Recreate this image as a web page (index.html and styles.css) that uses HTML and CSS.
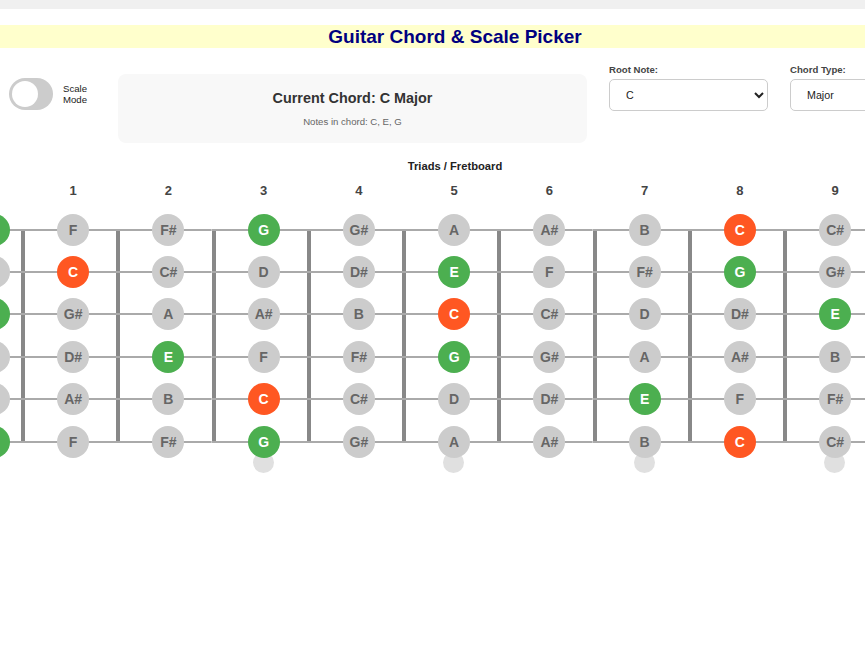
FILE: index.html
```html
<!DOCTYPE html>
<html lang="en">
<head>
    <meta charset="UTF-8">
    <meta name="viewport" content="width=device-width, initial-scale=1.0">
    <title>Guitar Chord &amp; Scale Picker</title>
    <link rel="stylesheet" href="styles.css">
</head>
<body>

<div class="topbar"></div>

<div class="page">
    <h1>Guitar Chord &amp; Scale Picker</h1>

    <div class="controls">
        <!-- Interruptor de modo escala -->
        <div class="toggle-group">
            <div class="switch"><div class="knob"></div></div>
            <span class="switch-label">Scale<br>Mode</span>
        </div>

        <div class="chord-info">
            <h3>Current Chord: C Major</h3>
            <p>Notes in chord: C, E, G</p>
        </div>

        <div class="select-group">
            <label for="root">Root Note:</label>
            <select id="root">
                <option>C</option><option>C#</option><option>D</option><option>D#</option>
                <option>E</option><option>F</option><option>F#</option><option>G</option>
                <option>G#</option><option>A</option><option>A#</option><option>B</option>
            </select>
        </div>

        <div class="select-group">
            <label for="type">Chord Type:</label>
            <select id="type">
                <option>Major</option><option>Minor</option><option>7th</option>
            </select>
        </div>
    </div>

    <div class="fretboard-title">Triads / Fretboard</div>
    <div class="board" id="board"></div>
</div>

<script>
    // Construir el diapasón: cuerdas de la 1ª (Mi agudo) a la 6ª
    var notas = ['C', 'C#', 'D', 'D#', 'E', 'F', 'F#', 'G', 'G#', 'A', 'A#', 'B'];
    var afinacion = [4, 11, 7, 2, 9, 4];
    var acorde = { 0: 'root', 4: 'tone', 7: 'tone' };
    var marcas = [3, 5, 7, 9, 12];
    var board = document.getElementById('board');

    for (var f = 0; f <= 12; f++) {
        var col = document.createElement('div');
        col.className = f === 0 ? 'fret open' : 'fret';

        var num = document.createElement('div');
        num.className = 'fret-num';
        num.innerHTML = f === 0 ? '&nbsp;' : f;
        col.appendChild(num);

        var strings = document.createElement('div');
        strings.className = 'strings';
        afinacion.forEach(function (base) {
            var n = (base + f) % 12;
            var cell = document.createElement('div');
            cell.className = 'string';
            var note = document.createElement('span');
            note.className = 'note' + (acorde[n] ? ' ' + acorde[n] : '');
            note.textContent = notas[n];
            cell.appendChild(note);
            strings.appendChild(cell);
        });
        col.appendChild(strings);

        var inlay = document.createElement('div');
        inlay.className = 'inlay-row';
        if (marcas.indexOf(f) !== -1) {
            var dot = document.createElement('span');
            dot.className = 'dot';
            inlay.appendChild(dot);
        }
        col.appendChild(inlay);

        board.appendChild(col);
    }
</script>

</body>
</html>
```

FILE: styles.css
```css
body {
    margin: 0;
    font-family: "Liberation Sans", Arial, sans-serif;
    background-color: #fff;
    color: #333;
    overflow: hidden;
}

.topbar {
    height: 9px;
    background-color: #f0f0f0;
}

.page {
    width: 910px;
}

h1 {
    margin: 16px 0 0;
    background-color: #ffffcc;
    color: #000080;
    font-size: 19px;
    line-height: 23px;
    text-align: center;
}

.controls {
    display: flex;
    align-items: flex-start;
    gap: 22px;
    padding-left: 9px;
    margin-top: 16px;
}

.toggle-group {
    flex: 0 0 87px;
    display: flex;
    align-items: center;
    gap: 10px;
    margin-top: 14px;
}

.switch {
    width: 44px;
    height: 32px;
    border-radius: 16px;
    background-color: #ccc;
    display: flex;
    align-items: center;
    padding: 0 3px;
    box-sizing: border-box;
}

.knob {
    width: 26px;
    height: 26px;
    border-radius: 50%;
    background-color: #fff;
}

.switch-label {
    font-size: 9.6px;
    line-height: 11px;
    color: #222;
}

.chord-info {
    flex: 0 0 469px;
    margin-top: 10px;
    padding: 16px;
    box-sizing: border-box;
    background-color: #f8f8f8;
    border-radius: 8px;
    text-align: center;
}

.chord-info h3 {
    margin: 0;
    font-size: 14.4px;
    line-height: 17px;
    color: #333;
}

.chord-info p {
    margin: 8.5px 0 0;
    font-size: 9.6px;
    line-height: 11px;
    color: #666;
}

.select-group {
    flex: 0 0 159px;
}

.select-group label {
    display: block;
    margin-bottom: 4px;
    font-size: 9.6px;
    line-height: 11px;
    font-weight: bold;
    color: #444;
}

.select-group select {
    width: 100%;
    height: 32px;
    padding: 0 12px;
    border: 1px solid #ccc;
    border-radius: 5px;
    background-color: #fff;
    font-family: inherit;
    font-size: 10.7px;
    color: #222;
}

.fretboard-title {
    margin-top: 16px;
    font-size: 11.2px;
    line-height: 14px;
    font-weight: bold;
    text-align: center;
    color: #222;
}

.board {
    display: flex;
    margin-top: 10px;
    margin-left: -33px;
}

.fret {
    flex: 0 0 95.25px;
}

.fret-num {
    padding-left: 9px;
    margin-bottom: 10px;
    font-size: 13px;
    line-height: 16px;
    font-weight: bold;
    text-align: center;
    color: #444;
}

.strings {
    background: linear-gradient(#888, #888) left center / 4px calc(100% - 42.4px) no-repeat;
}

.string {
    height: 42.4px;
    padding-left: 9px;
    display: flex;
    align-items: center;
    justify-content: center;
    background: linear-gradient(#aaa, #aaa) center / 100% 2px no-repeat;
}

/* Cuerdas al aire: columna más estrecha, sin traste a la izquierda */
.fret.open {
    flex-basis: 54px;
}

.fret.open .strings {
    background: none;
}

.fret.open .string,
.fret.open .fret-num {
    padding-left: 0;
}

.note {
    position: relative;
    z-index: 1;
    width: 32px;
    height: 32px;
    border-radius: 50%;
    background-color: #ccc;
    color: #666;
    font-size: 14px;
    font-weight: bold;
    display: flex;
    align-items: center;
    justify-content: center;
}

.note.root {
    background-color: #ff5722;
    color: #fff;
}

.note.tone {
    background-color: #4caf50;
    color: #fff;
}

.inlay-row {
    height: 21px;
    margin-top: -11px;
    padding-left: 8px;
    display: flex;
    justify-content: center;
}

.dot {
    width: 21px;
    height: 21px;
    border-radius: 50%;
    background-color: #e0e0e0;
}
```
